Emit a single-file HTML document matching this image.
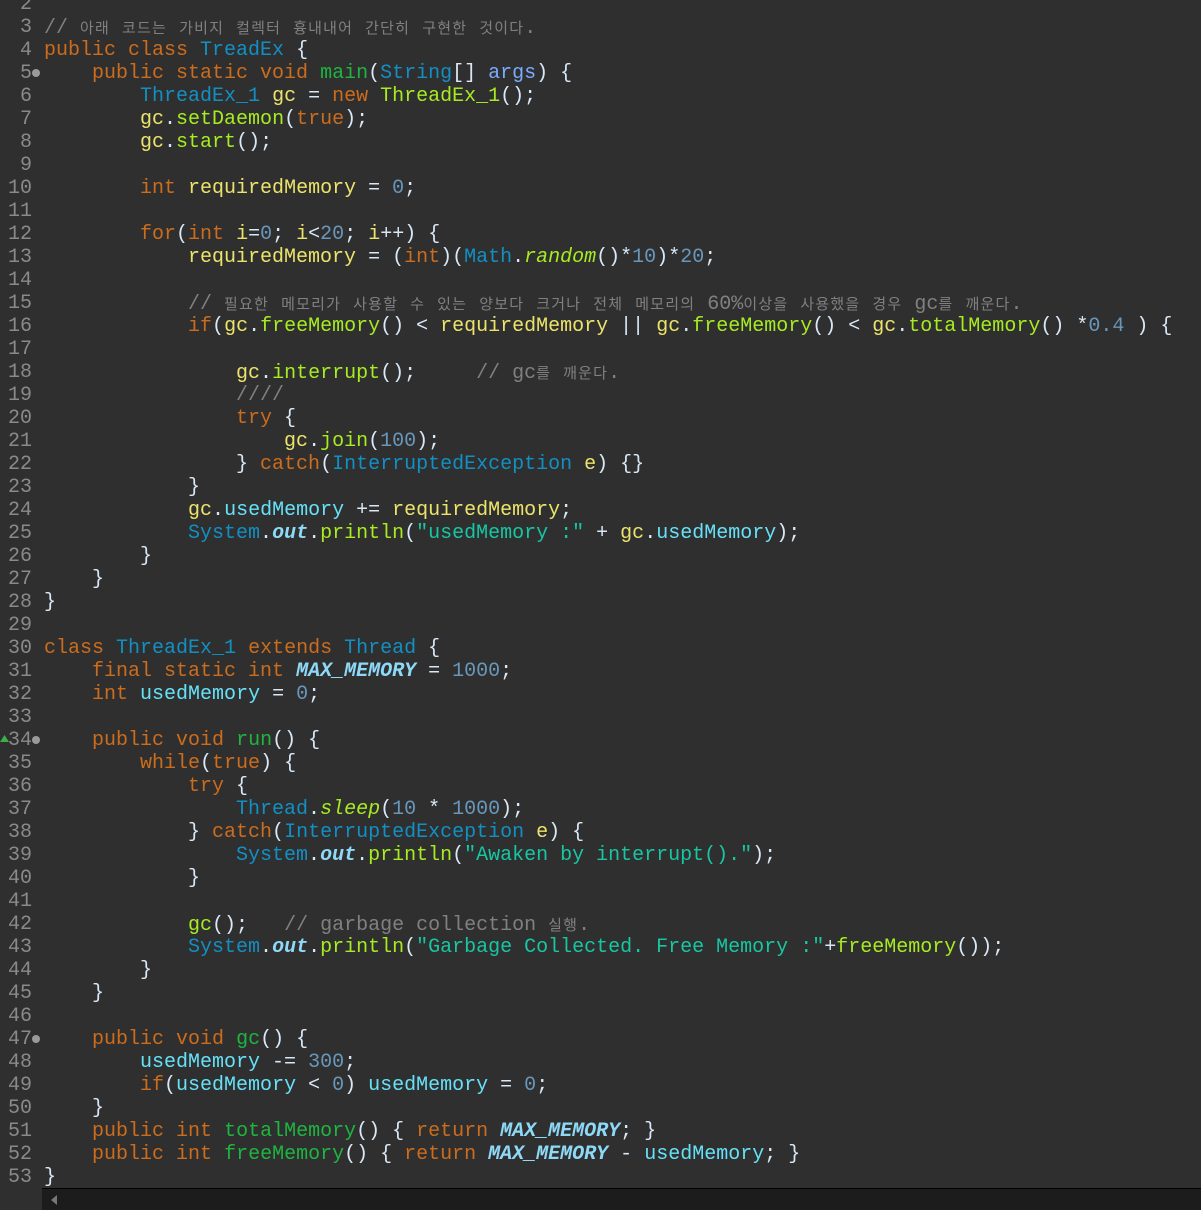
<!DOCTYPE html>
<html><head><meta charset="utf-8">
<style>
html,body{margin:0;padding:0;background:#2f2f2f;width:1201px;height:1209px;overflow:hidden}
#ed{position:absolute;left:0;top:-7.5px;width:1201px}
.l{position:relative;height:23.02px;line-height:23.02px;white-space:pre;font-family:"Liberation Mono",monospace;font-size:20px;color:#d9e8f7}
.n{position:absolute;left:0;width:32px;text-align:right;color:#8a8a8a}
.t{position:absolute;left:44px}
.h{font-family:"Noto Sans CJK KR","NanumGothic",sans-serif;font-size:15px;letter-spacing:1.2px}
.k{color:#cc6c1d}.c{color:#1290c3}.m{color:#1eb540}.v{color:#ece46a}.a{color:#a7ec21}
.f{color:#66e1f8}.u{color:#6897bb}.s{color:#17c6a3}.cm{color:#808080}.p{color:#79abff}
.o{color:#e6e6fa}.sf{color:#8dd9f7;font-weight:bold;font-style:italic}.it{font-style:italic}
.dot{position:absolute;left:32px;top:7px;width:8px;height:8px;border-radius:50%;background:#9a9a9a}
#sb{position:absolute;left:42px;top:1188px;width:1159px;height:21px;background:#1c1c1c;border-top:1px solid #000}
#sb:before{content:"";position:absolute;left:9px;top:6px;border-right:6px solid #777;border-top:5px solid transparent;border-bottom:5px solid transparent}
</style></head><body>
<div id="ed">
<div class="l"><span class="n">2</span></div>
<div class="l"><span class="n">3</span><span class="t cm">// <span class="h">아래</span> <span class="h">코드는</span> <span class="h">가비지</span> <span class="h">컬렉터</span> <span class="h">흉내내어</span> <span class="h">간단히</span> <span class="h">구현한</span> <span class="h">것이다</span>.</span></div>
<div class="l"><span class="n">4</span><span class="t"><span class="k">public class</span> <span class="c">TreadEx</span> {</span></div>
<div class="l"><span class="n">5</span><span class="dot"></span><span class="t">    <span class="k">public static void</span> <span class="m">main</span>(<span class="c">String</span>[] <span class="p">args</span>) {</span></div>
<div class="l"><span class="n">6</span><span class="t">        <span class="c">ThreadEx_1</span> <span class="v">gc</span> = <span class="k">new</span> <span class="a">ThreadEx_1</span>();</span></div>
<div class="l"><span class="n">7</span><span class="t">        <span class="v">gc</span>.<span class="a">setDaemon</span>(<span class="k">true</span>);</span></div>
<div class="l"><span class="n">8</span><span class="t">        <span class="v">gc</span>.<span class="a">start</span>();</span></div>
<div class="l"><span class="n">9</span></div>
<div class="l"><span class="n">10</span><span class="t">        <span class="k">int</span> <span class="v">requiredMemory</span> = <span class="u">0</span>;</span></div>
<div class="l"><span class="n">11</span></div>
<div class="l"><span class="n">12</span><span class="t">        <span class="k">for</span>(<span class="k">int</span> <span class="v">i</span>=<span class="u">0</span>; <span class="v">i</span>&lt;<span class="u">20</span>; <span class="v">i</span>++) {</span></div>
<div class="l"><span class="n">13</span><span class="t">            <span class="v">requiredMemory</span> = (<span class="k">int</span>)(<span class="c">Math</span>.<span class="a it">random</span>()*<span class="u">10</span>)*<span class="u">20</span>;</span></div>
<div class="l"><span class="n">14</span></div>
<div class="l"><span class="n">15</span><span class="t cm">            // <span class="h">필요한</span> <span class="h">메모리가</span> <span class="h">사용할</span> <span class="h">수</span> <span class="h">있는</span> <span class="h">양보다</span> <span class="h">크거나</span> <span class="h">전체</span> <span class="h">메모리의</span> 60%<span class="h">이상을</span> <span class="h">사용했을</span> <span class="h">경우</span> gc<span class="h">를</span> <span class="h">깨운다</span>.</span></div>
<div class="l"><span class="n">16</span><span class="t">            <span class="k">if</span>(<span class="v">gc</span>.<span class="a">freeMemory</span>() &lt; <span class="v">requiredMemory</span> || <span class="v">gc</span>.<span class="a">freeMemory</span>() &lt; <span class="v">gc</span>.<span class="a">totalMemory</span>() *<span class="u">0.4</span> ) {</span></div>
<div class="l"><span class="n">17</span></div>
<div class="l"><span class="n">18</span><span class="t">                <span class="v">gc</span>.<span class="a">interrupt</span>();     <span class="cm">// gc<span class="h">를</span> <span class="h">깨운다</span>.</span></span></div>
<div class="l"><span class="n">19</span><span class="t cm">                ////</span></div>
<div class="l"><span class="n">20</span><span class="t">                <span class="k">try</span> {</span></div>
<div class="l"><span class="n">21</span><span class="t">                    <span class="v">gc</span>.<span class="a">join</span>(<span class="u">100</span>);</span></div>
<div class="l"><span class="n">22</span><span class="t">                } <span class="k">catch</span>(<span class="c">InterruptedException</span> <span class="v">e</span>) {}</span></div>
<div class="l"><span class="n">23</span><span class="t">            }</span></div>
<div class="l"><span class="n">24</span><span class="t">            <span class="v">gc</span>.<span class="f">usedMemory</span> += <span class="v">requiredMemory</span>;</span></div>
<div class="l"><span class="n">25</span><span class="t">            <span class="c">System</span>.<span class="sf">out</span>.<span class="a">println</span>(<span class="s">"usedMemory :"</span> + <span class="v">gc</span>.<span class="f">usedMemory</span>);</span></div>
<div class="l"><span class="n">26</span><span class="t">        }</span></div>
<div class="l"><span class="n">27</span><span class="t">    }</span></div>
<div class="l"><span class="n">28</span><span class="t">}</span></div>
<div class="l"><span class="n">29</span></div>
<div class="l"><span class="n">30</span><span class="t"><span class="k">class</span> <span class="c">ThreadEx_1</span> <span class="k">extends</span> <span class="c">Thread</span> {</span></div>
<div class="l"><span class="n">31</span><span class="t">    <span class="k">final static int</span> <span class="sf">MAX_MEMORY</span> = <span class="u">1000</span>;</span></div>
<div class="l"><span class="n">32</span><span class="t">    <span class="k">int</span> <span class="f">usedMemory</span> = <span class="u">0</span>;</span></div>
<div class="l"><span class="n">33</span></div>
<div class="l"><span class="n">34</span><span class="dot"></span><svg style="position:absolute;left:0;top:5px" width="9" height="9"><path d="M0 8 L4.5 1 L9 8 Z" fill="#3cae4a"/></svg><span class="t">    <span class="k">public void</span> <span class="m">run</span>() {</span></div>
<div class="l"><span class="n">35</span><span class="t">        <span class="k">while</span>(<span class="k">true</span>) {</span></div>
<div class="l"><span class="n">36</span><span class="t">            <span class="k">try</span> {</span></div>
<div class="l"><span class="n">37</span><span class="t">                <span class="c">Thread</span>.<span class="a it">sleep</span>(<span class="u">10</span> * <span class="u">1000</span>);</span></div>
<div class="l"><span class="n">38</span><span class="t">            } <span class="k">catch</span>(<span class="c">InterruptedException</span> <span class="v">e</span>) {</span></div>
<div class="l"><span class="n">39</span><span class="t">                <span class="c">System</span>.<span class="sf">out</span>.<span class="a">println</span>(<span class="s">"Awaken by interrupt()."</span>);</span></div>
<div class="l"><span class="n">40</span><span class="t">            }</span></div>
<div class="l"><span class="n">41</span></div>
<div class="l"><span class="n">42</span><span class="t">            <span class="a">gc</span>();   <span class="cm">// garbage collection <span class="h">실행</span>.</span></span></div>
<div class="l"><span class="n">43</span><span class="t">            <span class="c">System</span>.<span class="sf">out</span>.<span class="a">println</span>(<span class="s">"Garbage Collected. Free Memory :"</span>+<span class="a">freeMemory</span>());</span></div>
<div class="l"><span class="n">44</span><span class="t">        }</span></div>
<div class="l"><span class="n">45</span><span class="t">    }</span></div>
<div class="l"><span class="n">46</span></div>
<div class="l"><span class="n">47</span><span class="dot"></span><span class="t">    <span class="k">public void</span> <span class="m">gc</span>() {</span></div>
<div class="l"><span class="n">48</span><span class="t">        <span class="f">usedMemory</span> -= <span class="u">300</span>;</span></div>
<div class="l"><span class="n">49</span><span class="t">        <span class="k">if</span>(<span class="f">usedMemory</span> &lt; <span class="u">0</span>) <span class="f">usedMemory</span> = <span class="u">0</span>;</span></div>
<div class="l"><span class="n">50</span><span class="t">    }</span></div>
<div class="l"><span class="n">51</span><span class="t">    <span class="k">public int</span> <span class="m">totalMemory</span>() { <span class="k">return</span> <span class="sf">MAX_MEMORY</span>; }</span></div>
<div class="l"><span class="n">52</span><span class="t">    <span class="k">public int</span> <span class="m">freeMemory</span>() { <span class="k">return</span> <span class="sf">MAX_MEMORY</span> - <span class="f">usedMemory</span>; }</span></div>
<div class="l"><span class="n">53</span><span class="t">}</span></div>
</div>
<div id="sb"></div>
</body></html>
